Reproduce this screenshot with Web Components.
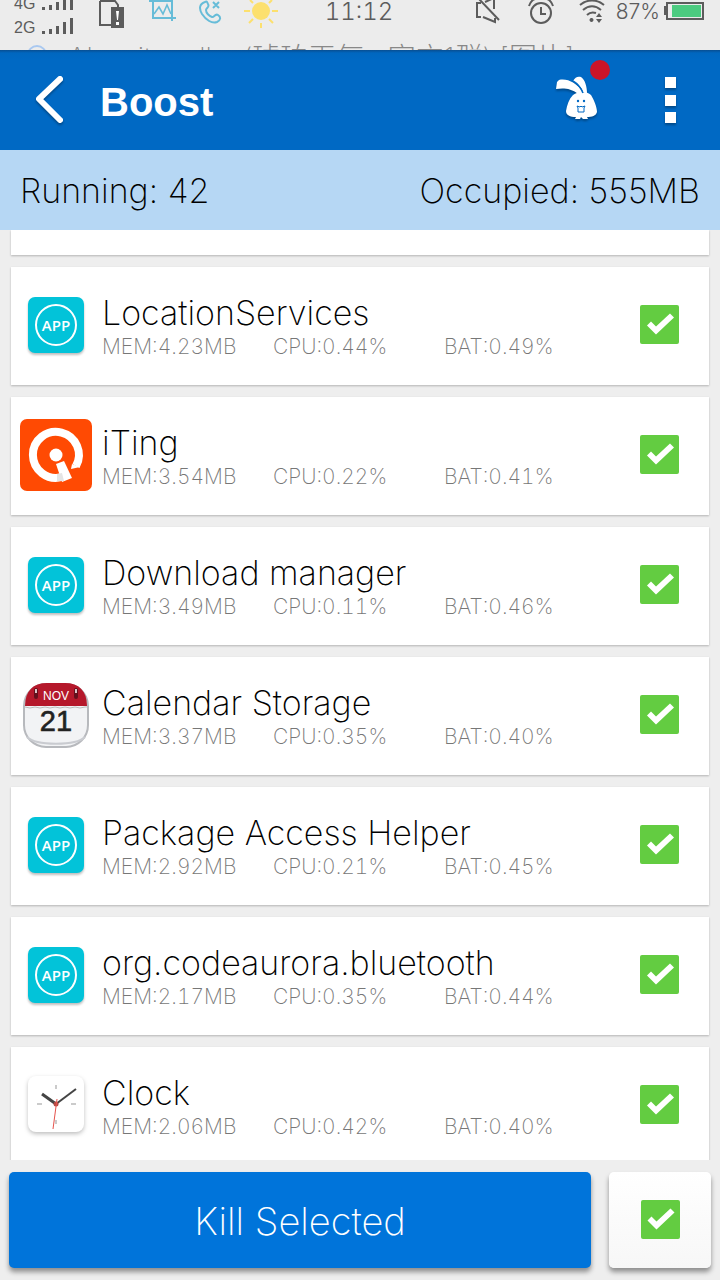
<!DOCTYPE html>
<html lang="en">
<head>
<meta charset="utf-8">
<meta name="viewport" content="width=device-width, initial-scale=1">
<title>Boost</title>
<style>
    html, body {
        margin: 0;
        height: 100%;
    }
    body {
        background: #eee;
        font-family: Inter, "Liberation Sans", "Noto Sans CJK SC", sans-serif;
        font-weight: 200;
    }
</style>
</head>
<body>
<boost-page></boost-page>

<script>
// status bar on top of the screen
class StatusBar extends HTMLElement {
    constructor() {
        super()
        this.attachShadow({ mode: 'open' })
        this.shadowRoot.innerHTML = `
            <style>
                :host {
                    display: flex;
                    flex-direction: column;
                    flex: none;
                    height: 50px;
                    overflow: hidden;
                    box-sizing: border-box;
                    background: #ececec;
                    color: #5c5c5c;
                }
                .row {
                    flex: none;
                    display: grid;
                    grid-template-columns: 1fr auto 1fr;
                    align-items: start;
                    height: 40px;
                    padding: 0 16px 0 14px;
                }
                .left, .right {
                    display: flex;
                    align-items: start;
                }
                .right {
                    justify-content: flex-end;
                }
                .networks {
                    display: grid;
                    grid-template-columns: 22px 36px;
                    grid-auto-rows: 24px;
                    column-gap: 4px;
                    margin-top: -8px;
                    font: 16px/24px "Liberation Sans", sans-serif;
                }
                .networks svg {
                    align-self: start;
                    margin-top: 2px;
                }
                .sim { margin-left: 22px; }
                .shot { margin-left: 23px; }
                .call { margin-left: 22px; }
                .sun { margin-left: 18px; }
                .time {
                    font-size: 24px;
                    line-height: 24px;
                    font-weight: 300;
                    font-variant-numeric: tabular-nums;
                }
                .alarm { margin-left: 24px; }
                .wifi { margin-left: 24px; }
                .percent {
                    margin-left: 11px;
                    font-size: 21px;
                    line-height: 24px;
                    font-weight: 300;
                }
                .battery { margin-left: 4px; }
                svg {
                    display: block;
                    flex: none;
                }
                .ticker {
                    flex: none;
                    padding-left: 26px;
                    display: flex;
                    gap: 20px;
                    font-size: 28px;
                    line-height: 36px;
                    color: #888;
                    white-space: nowrap;
                }
                .ticker svg { margin-top: 4px; }
            </style>
            <div class="row">
                <div class="left">
                    <div class="networks">
                        <span>4G</span>
                        <svg width="34" height="17" fill="#5c5c5c"><path d="M2 13h3v3h-3zM9 11h3v5h-3zM16 8h3v8h-3zM23 4h3v12h-3zM30 0h3v16h-3z"/></svg>
                        <span>2G</span>
                        <svg width="34" height="17" fill="#5c5c5c"><path d="M2 13h3v3h-3zM9 11h3v5h-3zM16 8h3v8h-3zM23 4h3v12h-3zM30 0h3v16h-3z"/></svg>
                    </div>
                    <svg class="sim" width="28" height="28"><path d="M2 1V25H13M2 1H17L20 5V8" fill="none" stroke="#5c5c5c" stroke-width="2"/><path d="M13 7h13v21h-13z" fill="#5c5c5c"/><path d="M18 11h3l-1 9h-1zM18 22h3v3h-3z" fill="#fff"/></svg>
                    <svg class="shot" width="28" height="24" fill="none" stroke="#66bcd8" stroke-width="2"><path d="M0 1H23V21M4 0V18H27"/><path d="M5 14L10 7L14 14L18 5L22 14" stroke-width="1.6"/></svg>
                    <svg class="call" width="26" height="24" fill="none" stroke="#66bcd8" stroke-width="2"><path d="M6 2C0 4 0 9 3 14C7 20 13 24 18 22C22 20 22 17 19 15C16 13 15 18 13 17C10 16 7 13 7 10C7 8 11 7 9 4C8 2 8 1 6 2zM14 2L20 8M20 2L14 8"/></svg>
                    <svg class="sun" width="36" height="28"><circle cx="18" cy="11" r="9" fill="#fce06e"/><path d="M18 23v5M1 11h6M29 11h6M6 23l4-4M26 19l4 4M7 0l3 3M29 0l-3 3" stroke="#fce06e" stroke-width="2"/></svg>
                </div>
                <span class="time">11:12</span>
                <div class="right">
                    <svg width="28" height="25" fill="none" stroke="#5c5c5c" stroke-width="2"><path d="M6 3H2V17H6M10 2L19 -2V9M8 17L20 22V18M4 -1L24 20"/></svg>
                    <svg class="alarm" width="28" height="25" fill="none" stroke="#5c5c5c" stroke-width="2"><circle cx="14" cy="13" r="10"/><path d="M14 7V14H19M2 6C3 3 5 0 8 -1M26 6C25 3 23 0 20 -1"/></svg>
                    <svg class="wifi" width="26" height="24" fill="none" stroke="#5c5c5c" stroke-width="2"><path d="M1 5C8 -1 18 -1 25 5M4 10C10 5 16 5 22 10M8 15C11 12 14 12 17 13"/><path d="M12 18a2 2 0 1 0 1 0zM20 13l3 4h-6zM20 23l3-4h-6z" fill="#5c5c5c" stroke="none"/></svg>
                    <span class="percent">87%</span>
                    <svg class="battery" width="40" height="21"><path d="M0 6h3v9h-3z" fill="#5c5c5c"/><rect x="3" y="3" width="36" height="16" fill="none" stroke="#5c5c5c" stroke-width="2"/><rect x="8" y="5" width="29" height="12" fill="#4ccb80"/></svg>
                </div>
            </div>
            <div class="ticker">
                <svg width="22" height="22"><circle cx="11" cy="11" r="9" fill="none" stroke="#a9c8f0" stroke-width="2"/></svg>
                <span>Alazaitu .. ll .. (琥珀天气 · 官方1群) [图片]</span>
            </div>
        `
    }
}

class TitleBar extends HTMLElement {
    constructor() {
        super()
        this.attachShadow({ mode: 'open' })
        this.shadowRoot.innerHTML = `
            <style>
                :host {
                    display: flex;
                    flex: none;
                    align-items: center;
                    height: 100px;
                    padding: 0 40px 0 26px;
                    box-sizing: border-box;
                    background: linear-gradient(#084e92, #0067c0 3px, #0069c4 10px, #0069c4);
                    color: #fff;
                }
                h1 {
                    flex: 1;
                    margin: 4px 0 0 24px;
                    font: bold 40px/48px "Liberation Sans", sans-serif;
                }
                button {
                    display: block;
                    border: 0;
                    padding: 0;
                    background: none;
                }
                svg {
                    display: block;
                    overflow: visible;
                    filter: drop-shadow(0 2px 1px rgba(0, 0, 0, 0.3));
                }
                .rabbit {
                    position: relative;
                    margin: 0 62px 4px 0;
                }
                .dot {
                    position: absolute;
                    top: -16px;
                    right: -12px;
                    width: 20px;
                    height: 20px;
                    border-radius: 50%;
                    background: #cb1428;
                }
            </style>
            <button aria-label="Back"><svg width="50" height="50" fill="none" stroke="#fff" stroke-width="6" stroke-linecap="round" stroke-linejoin="round"><path d="M34 4L13 24L34 45"/></svg></button>
            <h1><slot></slot></h1>
            <button class="rabbit" aria-label="Rabbit">
                <svg width="42" height="44" fill="#fff">
                    <path d="M0 13L1 6L3 4C11 2 21 7 27 16L22 18C15 12 7 12 0 13zM17 5C19 1 22 0 25 1C29 4 31 10 31 18L27 16C26 12 23 9 17 5z"/>
                    <path d="M17 19C22 15 31 15 35 19C38 24 41 31 41 36C40 40 36 41 31 41L32 43H27L25 41L24 43H19L20 41C14 41 10 39 10 35C11 29 13 23 17 19z"/>
                    <path d="M17 5C22 8 25 12 27 17" fill="none" stroke="#0069c4" stroke-width="1.5"/>
                    <g fill="#0069c4"><circle cx="22" cy="25" r="1.2"/><circle cx="28" cy="25" r="1.2"/></g>
                    <path d="M22 36V32L21 30L24 31L25 30L26 31L29 30L28 32V36z" fill="none" stroke="#0069c4"/>
                </svg>
                <span class="dot"></span>
            </button>
            <button aria-label="More"><svg width="20" height="46" fill="#fff"><path d="M5 0h11v11h-11zM5 18h11v11h-11zM5 35h11v11h-11z"/></svg></button>
        `
    }
}

class SummaryBar extends HTMLElement {
    constructor() {
        super()
        this.attachShadow({ mode: 'open' })
        this.shadowRoot.innerHTML = `
            <style>
                :host {
                    display: flex;
                    flex: none;
                    justify-content: space-between;
                    height: 80px;
                    padding: 0 20px;
                    box-sizing: border-box;
                    background: #b6d7f4;
                    color: #000;
                    font-size: 34px;
                    line-height: 82px;
                }
            </style>
            <slot></slot>
        `
    }
}

// green tick box
class TickBox extends HTMLElement {
    constructor() {
        super()
        this.attachShadow({ mode: 'open' })
        this.shadowRoot.innerHTML = `
            <style>
                :host {
                    display: block;
                    padding-bottom: 2px;
                }
                input {
                    appearance: none;
                    display: block;
                    width: 39px;
                    height: 39px;
                    margin: 0;
                    border-radius: 2px;
                    background: #ccc;
                }
                input:checked {
                    background: #63cc41;
                }
                input:checked::before {
                    content: "";
                    display: block;
                    width: 39px;
                    height: 39px;
                    background: #fff;
                    clip-path: polygon(7px 21px, 11px 17px, 16px 22px, 30px 9px, 34px 13px, 16px 30px);
                }
            </style>
            <input type="checkbox" checked>
        `
        this.shadowRoot.querySelector('input').setAttribute('aria-label', this.getAttribute('label') || '')
    }
}

const icons = {
    app: `
        <rect x="8" y="8" width="56" height="56" rx="7" fill="#02c3d9" filter="drop-shadow(0 2px 1px rgba(0,0,0,.25))"/>
        <circle cx="36" cy="36" r="20" fill="none" stroke="#fff" stroke-width="2"/>
        <text x="36" y="42" text-anchor="middle" fill="#fff" font-family="Open Sans" font-size="15" font-weight="600">APP</text>`,
    iting: `
        <rect width="72" height="72" rx="7" fill="#ff4a03"/>
        <path d="M42 58A23 23 0 1 1 56 47" fill="none" stroke="#fff" stroke-width="8"/>
        <path d="M52 45L51 50L60 48z" fill="#fff"/>
        <circle cx="36" cy="36" r="6.5" fill="#fff"/>
        <path d="M36 45L44 42L52 59L42 63z" fill="#fff"/>
        <path d="M37 55L42 54L44 62L37 62z" fill="#e4e4e4"/>`,
    calendar: `
        <rect x="4" y="5" width="64" height="63" rx="22" fill="#f2f3f5" stroke="#b7b9bd" stroke-width="2"/>
        <path d="M7 58C16 67 56 67 65 58" fill="none" stroke="#c9cbd0" stroke-width="2"/>
        <path d="M5 27C5 12 13 4 27 4H45C59 4 67 12 67 27z" fill="#b5182b"/>
        <path d="M5 28l5 1 5-1 5 1 5-1 5 1 5-1 5 1 5-1 5 1 5-1 5 1 5-1 2 0" fill="none" stroke="#bbb"/>
        <path d="M16 11v7M56 11v7" stroke="#64101c" stroke-width="4" stroke-linecap="round"/>
        <path d="M16 10v4M56 10v4" stroke="#fff" stroke-width="1.5"/>
        <text x="36" y="21" text-anchor="middle" fill="#fff" font-family="Liberation Sans" font-size="12" font-weight="400">NOV</text>
        <text x="36" y="52" text-anchor="middle" fill="#222" font-family="Liberation Sans" font-size="29" font-weight="400" stroke="#222" stroke-width=".6">21</text>`,
    clock: `
        <rect x="8" y="7" width="56" height="56" rx="8" fill="#fff" filter="drop-shadow(0 2px 2px rgba(0,0,0,.25))"/>
        <path d="M36 16v4M17 35h5M51 35h5M36 51v4" stroke="#bbb" stroke-width="1.5"/>
        <path d="M36 35L22 25" stroke="#444" stroke-width="3"/>
        <path d="M36 35L56 20" stroke="#444" stroke-width="2"/>
        <circle cx="36" cy="35" r="2.5" fill="#b34a45"/>
        <path d="M37 30L33 60" stroke="#e5524c"/>`
}

class AppCard extends HTMLElement {
    constructor() {
        super()
        this.attachShadow({ mode: 'open' })
        this.shadowRoot.innerHTML = `
            <style>
                :host {
                    display: flex;
                    flex: none;
                    align-items: center;
                    height: 118px;
                    padding: 0 30px 2px 9px;
                    box-sizing: border-box;
                    background: #fff;
                    box-shadow: 0 1px 2px rgba(0, 0, 0, 0.25);
                }
                svg {
                    flex: none;
                    display: block;
                }
                .text {
                    flex: 1;
                    min-width: 0;
                    padding: 4px 0 0 10px;
                }
                h2 {
                    margin: 0;
                    font-size: 34px;
                    line-height: 40px;
                    font-weight: inherit;
                    white-space: nowrap;
                }
                .stats {
                    display: grid;
                    grid-template-columns: 171px 171px auto;
                    font-size: 21px;
                    line-height: 28px;
                    font-variant-numeric: tabular-nums;
                    color: #777;
                }
            </style>
            <svg width="72" height="72" viewBox="0 0 72 72" aria-hidden="true">${icons[this.getAttribute('icon')]}</svg>
            <div class="text">
                <h2>${this.getAttribute('name')}</h2>
                <div class="stats"><slot></slot></div>
            </div>
            <tick-box label="${this.getAttribute('name')}"></tick-box>
        `
    }
}

class ActionBar extends HTMLElement {
    constructor() {
        super()
        this.attachShadow({ mode: 'open' })
        this.shadowRoot.innerHTML = `
            <style>
                :host {
                    display: flex;
                    flex: none;
                    gap: 18px;
                    height: 120px;
                    padding: 12px 9px;
                    box-sizing: border-box;
                    background: #eee;
                }
                button, .all {
                    border-radius: 5px;
                    box-shadow: 0 4px 5px rgba(0, 0, 0, 0.4);
                }
                button {
                    flex: 1;
                    border: 0;
                    padding: 2px 0 0;
                    background: #0074da;
                    color: #fff;
                    font: inherit;
                    font-size: 38px;
                }
                .all {
                    display: flex;
                    align-items: center;
                    justify-content: center;
                    width: 102px;
                    background: linear-gradient(#fff, #f7f7f7);
                }
            </style>
            <button><slot></slot></button>
            <div class="all"><tick-box label="Select all"></tick-box></div>
        `
    }
}

const apps = [
    ['app', 'LocationServices', '4.23', '0.44', '0.49'],
    ['iting', 'iTing', '3.54', '0.22', '0.41'],
    ['app', 'Download manager', '3.49', '0.11', '0.46'],
    ['calendar', 'Calendar Storage', '3.37', '0.35', '0.40'],
    ['app', 'Package Access Helper', '2.92', '0.21', '0.45'],
    ['app', 'org.codeaurora.bluetooth', '2.17', '0.35', '0.44'],
    ['clock', 'Clock', '2.06', '0.42', '0.40']
]

class BoostPage extends HTMLElement {
    constructor() {
        super()
        this.attachShadow({ mode: 'open' })
        this.shadowRoot.innerHTML = `
            <style>
                :host {
                    display: flex;
                    flex-direction: column;
                    height: 100vh;
                    overflow: hidden;
                }
                main {
                    flex: 1;
                    min-height: 0;
                    display: flex;
                    flex-direction: column;
                    gap: 12px;
                    padding: 0 11px;
                    overflow: hidden;
                }
                .previous {
                    flex: none;
                    height: 25px;
                    background: #fff;
                    box-shadow: 0 1px 2px rgba(0, 0, 0, 0.25);
                }
            </style>
            <status-bar></status-bar>
            <title-bar>Boost</title-bar>
            <summary-bar><span>Running: 42</span><span>Occupied: 555MB</span></summary-bar>
            <main>
                <div class="previous"></div>
                ${apps.map(([icon, name, mem, cpu, bat]) => `
                <app-card icon="${icon}" name="${name}">
                    <span>MEM:${mem}MB</span><span>CPU:${cpu}%</span><span>BAT:${bat}%</span>
                </app-card>`).join('')}
            </main>
            <action-bar>Kill Selected</action-bar>
        `
    }
}

customElements.define('status-bar', StatusBar)
customElements.define('title-bar', TitleBar)
customElements.define('summary-bar', SummaryBar)
customElements.define('tick-box', TickBox)
customElements.define('app-card', AppCard)
customElements.define('action-bar', ActionBar)
customElements.define('boost-page', BoostPage)
</script>
</body>
</html>
